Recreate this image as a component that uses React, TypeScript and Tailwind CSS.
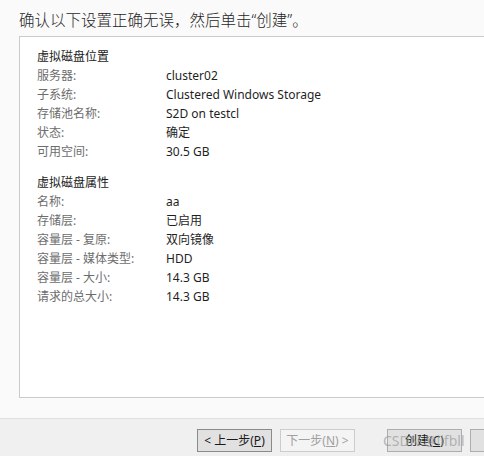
const font = "font-['Noto_Sans','Noto_Sans_CJK_SC',sans-serif]";

const location = [
  ['服务器:', 'cluster02'],
  ['子系统:', 'Clustered Windows Storage'],
  ['存储池名称:', 'S2D on testcl'],
  ['状态:', '确定'],
  ['可用空间:', '30.5 GB'],
];

const props = [
  ['名称:', 'aa'],
  ['存储层:', '已启用'],
  ['容量层 - 复原:', '双向镜像'],
  ['容量层 - 媒体类型:', 'HDD'],
  ['容量层 - 大小:', '14.3 GB'],
  ['请求的总大小:', '14.3 GB'],
];

function Section({ title, rows, className = '' }: { title: string; rows: string[][]; className?: string }) {
  return (
    <div className={className}>
      <div className="h-[19px] leading-[19px] text-[12px] text-[#1a1a1a]">{title}</div>
      {rows.map(([label, value]) => (
        <div key={label} className="flex h-[19px] leading-[19px] text-[12px]">
          <span className="w-[129px] shrink-0 text-[#6d6d6d]">{label}</span>
          <span className="text-[#1f1f1f]">{value}</span>
        </div>
      ))}
    </div>
  );
}

const btn = 'h-[23px] w-[75px] shrink-0 whitespace-nowrap border leading-[21px]';

export default function App() {
  return (
    <div className={`relative flex h-[456px] w-[484px] flex-col overflow-hidden bg-[#fafafa] ${font}`}>
      {/* Title */}
      <div className="h-[36px] pl-[19px] pt-[9px] text-[15.5px] font-light leading-[22px] text-[#1e1e1e]">
        确认以下设置正确无误，然后单击“创建”。
      </div>

      {/* Summary box */}
      <div className="ml-[19px] h-[362px] w-[500px] shrink-0 border border-[#cbcbcb] bg-white pl-[17px] pt-[10px]">
        <Section title="虚拟磁盘位置" rows={location} />
        <Section title="虚拟磁盘属性" rows={props} className="mt-[12px]" />
      </div>

      <div className="h-[20px] shrink-0" />

      {/* Footer */}
      <div className="flex flex-1 items-start border-t border-[#dfdfdf] bg-[#f0f0f0] pt-[10px] text-[12px]">
        <button className={`${btn} ml-[197px] border-[#8a8a8a] bg-[#e1e1e1] text-[#1a1a1a]`}>
          &lt; 上一步(<span className="underline">P</span>)
        </button>
        <button className={`${btn} ml-[8px] border-[#cccccc] bg-[#f4f4f4] text-[#a0a0a0]`}>
          下一步(<span className="underline">N</span>) &gt;
        </button>
        <button className={`${btn} ml-[32px] border-[#adadad] bg-[#e1e1e1] text-[#1a1a1a]`}>
          创建(<span className="underline">C</span>)
        </button>
        <button className={`${btn} ml-[8px] border-[#adadad] bg-[#e1e1e1]`} />
      </div>

      {/* Watermark */}
      <div className="absolute left-[383px] top-[432px] whitespace-nowrap text-[14px] leading-[18px] text-[#9a9a9a]/70">
        CSDN @llfbll
      </div>
    </div>
  );
}
